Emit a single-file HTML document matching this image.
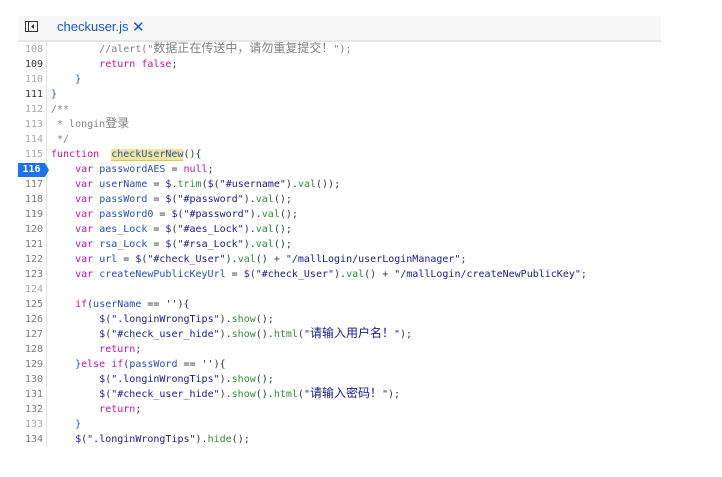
<!DOCTYPE html>
<html><head><meta charset="utf-8"><style>
body{margin:0;width:722px;height:477px;background:#fff;overflow:hidden;position:relative;font-family:"DejaVu Sans Mono","Liberation Mono","Noto Sans CJK SC",monospace;}
.tab{position:absolute;left:18px;top:16px;width:643px;height:24px;background:#f7f7f7;border-bottom:2px solid #e6e6e6;}
.tab .t{position:absolute;left:39px;top:3px;font:13px "Liberation Sans","DejaVu Sans",sans-serif;color:#1a56c8;}
.tab .x{position:absolute;left:114px;top:2px;font:15px "DejaVu Sans",sans-serif;color:#1a56c8;}
.gut{position:absolute;left:18px;top:42px;width:28px;height:405px;border-right:1px solid #e3e3e3;}
.ln{position:absolute;left:18px;width:25px;text-align:right;font-size:10px;color:#7a7a7a;line-height:15px;margin-top:1px;}
.ln.d{color:#333;}.ln.l{color:#a8a8a8;}
.code{position:absolute;left:51px;top:42px;font-size:10px;line-height:15px;white-space:pre;color:#303942;}
.k{color:#c4139d}.i{color:#2450b4}.s{color:#1a1a8c}.m{color:#2f8f3a}.c{color:#7f7f7f}.n{color:#1a1aa6}
.z{font-family:"Noto Sans CJK SC",sans-serif;font-size:12px;line-height:10px}
.hl{background:#f2e69a;border-bottom:1px solid #d9c65a}
.badge{position:absolute;left:18px;top:163px;width:27px;height:14px;background:#1a73e8;color:#fff;font-size:10px;line-height:14px;text-align:center;font-weight:bold;}
.badge:after{content:"";position:absolute;right:-4px;top:0;border-left:4px solid #1a73e8;border-top:7px solid transparent;border-bottom:7px solid transparent;}
</style></head><body>
<div class="tab">
<svg style="position:absolute;left:7px;top:5px" width="13" height="11"><rect x="0.5" y="0.5" width="12" height="10" fill="none" stroke="#333"/><line x1="3.5" y1="1" x2="3.5" y2="10" stroke="#333"/><path d="M9 3 L6 5.5 L9 8 Z" fill="#333"/></svg>
<span class="t">checkuser.js</span><span class="x">✕</span>
</div>
<div class="gut"></div>
<div class="ln l" style="top:41px">108</div>
<div class="ln d" style="top:56px">109</div>
<div class="ln l" style="top:71px">110</div>
<div class="ln d" style="top:86px">111</div>
<div class="ln l" style="top:101px">112</div>
<div class="ln l" style="top:116px">113</div>
<div class="ln l" style="top:131px">114</div>
<div class="ln l" style="top:146px">115</div>
<div class="badge">116</div>
<div class="ln" style="top:176px">117</div>
<div class="ln" style="top:191px">118</div>
<div class="ln" style="top:206px">119</div>
<div class="ln" style="top:221px">120</div>
<div class="ln" style="top:236px">121</div>
<div class="ln" style="top:251px">122</div>
<div class="ln" style="top:266px">123</div>
<div class="ln l" style="top:281px">124</div>
<div class="ln" style="top:296px">125</div>
<div class="ln" style="top:311px">126</div>
<div class="ln" style="top:326px">127</div>
<div class="ln" style="top:341px">128</div>
<div class="ln" style="top:356px">129</div>
<div class="ln" style="top:371px">130</div>
<div class="ln" style="top:386px">131</div>
<div class="ln" style="top:401px">132</div>
<div class="ln l" style="top:416px">133</div>
<div class="ln" style="top:431px">134</div>
<div class="code"><span class="c">        //alert("<span class="z">数据正在传送中，请勿重复提交！</span>");</span>
        <span class="k">return</span> <span class="k">false</span>;
    <span class="i">}</span>
<span class="i">}</span>
<span class="c">/**
 * longin<span class="z">登录</span>
 */</span>
<span class="k">function</span>  <span class="i hl">checkUserNew</span>(){
    <span class="k">var</span> <span class="i">passwordAES</span> = <span class="k">null</span>;
    <span class="k">var</span> <span class="i">userName</span> = <span class="n">$</span>.<span class="m">trim</span>(<span class="n">$</span>(<span class="s">"#username"</span>).<span class="m">val</span>());
    <span class="k">var</span> <span class="i">passWord</span> = <span class="n">$</span>(<span class="s">"#password"</span>).<span class="m">val</span>();
    <span class="k">var</span> <span class="i">passWord0</span> = <span class="n">$</span>(<span class="s">"#password"</span>).<span class="m">val</span>();
    <span class="k">var</span> <span class="i">aes_Lock</span> = <span class="n">$</span>(<span class="s">"#aes_Lock"</span>).<span class="m">val</span>();
    <span class="k">var</span> <span class="i">rsa_Lock</span> = <span class="n">$</span>(<span class="s">"#rsa_Lock"</span>).<span class="m">val</span>();
    <span class="k">var</span> <span class="i">url</span> = <span class="n">$</span>(<span class="s">"#check_User"</span>).<span class="m">val</span>() + <span class="s">"/mallLogin/userLoginManager"</span>;
    <span class="k">var</span> <span class="i">createNewPublicKeyUrl</span> = <span class="n">$</span>(<span class="s">"#check_User"</span>).<span class="m">val</span>() + <span class="s">"/mallLogin/createNewPublicKey"</span>;

    <span class="k">if</span>(<span class="i">userName</span> == <span class="s">''</span>){
        <span class="n">$</span>(<span class="s">".longinWrongTips"</span>).<span class="m">show</span>();
        <span class="n">$</span>(<span class="s">"#check_user_hide"</span>).<span class="m">show</span>().<span class="m">html</span>(<span class="s">"<span class="z">请输入用户名！</span>"</span>);
        <span class="k">return</span>;
    <span class="i">}</span><span class="k">else if</span>(<span class="i">passWord</span> == <span class="s">''</span>){
        <span class="n">$</span>(<span class="s">".longinWrongTips"</span>).<span class="m">show</span>();
        <span class="n">$</span>(<span class="s">"#check_user_hide"</span>).<span class="m">show</span>().<span class="m">html</span>(<span class="s">"<span class="z">请输入密码！</span>"</span>);
        <span class="k">return</span>;
    <span class="i">}</span>
    <span class="n">$</span>(<span class="s">".longinWrongTips"</span>).<span class="m">hide</span>();</div>
</body></html>
